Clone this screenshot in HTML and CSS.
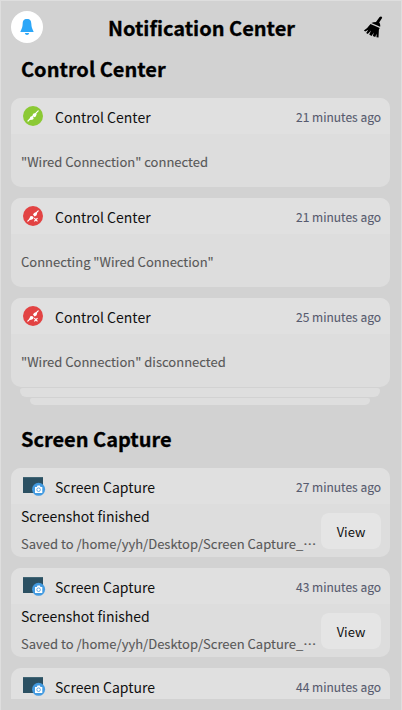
FILE: index.html
```html
<!DOCTYPE html>
<html lang="en">
<head>
<meta charset="utf-8">
<title>Notification Center</title>
<link rel="stylesheet" href="styles.css">
</head>
<body>
<svg class="defs" aria-hidden="true">
  <symbol id="net-plug" viewBox="0 0 20 20">
    <path d="M5 15L15.2 4.8" stroke="#fff" stroke-width="1.2" stroke-linecap="round"/>
    <path d="M6.600 13.200l.7-2.500 1.700-.5 1.800 1.800-.8 1.500-2.300.6z" fill="#fff"/>
    <path d="M9.500 9.600l.6-1.800 2.700-.8.900.9-.9 2.500-1.600.8z" fill="#fff"/>
  </symbol>
  <symbol id="net-off" viewBox="0 0 20 20">
    <path d="M4.800 15.200L7.500 12.500M12 8L15.200 4.800" stroke="#fff" stroke-width="1.200" stroke-linecap="round"/>
    <path d="M6.300 12.800l1-2.600 1.900-.3 1.500 1.500-.7 1.700-2.400.8z" fill="#fff"/>
    <path d="M10 8.700l1-1.800 2.100-.6 1 1-.5 2-1.900 1.200z" fill="#fff"/>
    <path d="M11.300 12.200l3.200 3.200M14.500 12.200l-3.200 3.200" stroke="#fff" stroke-width="1.200"/>
  </symbol>
  <symbol id="capture" viewBox="0 0 24 20">
    <rect x="0" y="1" width="20" height="16" rx=".6" fill="#2b5062"/>
    <path d="M.5 1.500h19" stroke="#416675"/>
    <circle cx="15.600" cy="13.300" r="6.500" fill="#439be1"/>
    <path d="M12 11h1.800l.7-1.400h2.300l.7 1.400h1.800v6H12z" fill="#fff"/>
    <circle cx="15.600" cy="13.700" r="1.800" fill="none" stroke="#439be1" stroke-width=".8"/>
  </symbol>
</svg>
<main class="panel">
  <header class="top">
    <span class="bell"><svg width="14" height="17" viewBox="0 0 14 17"><path d="M7 0C10.300 0 11.200 2 11.300 4.600C11.500 8.300 12 9.500 13.700 12.900H.3C2 9.500 2.500 8.300 2.700 4.600C2.800 2 3.700 0 7 0zM4.800 14h4.400Q8.800 15.900 7 15.900T4.800 14z" fill="#2ca7f8"/></svg></span>
    <h1>Notification Center</h1>
    <svg class="broom" width="20" height="22" viewBox="0 0 20 22"><path d="M16.600.9Q18.600-.1 19.200 1.700L16.200 6.500Q17.700 8.300 17.100 10.800L8.400 7.100Q10.400 5.900 13 5.900z"/><path d="M7.500 8.100L16.700 12L15.900 13.800L15.500 21.500L13.500 21.300L13.600 17.800L12.200 20.900L9.800 19.900L10.900 16.500L8.500 20.100L6.200 18.600L8.100 14.600L4.700 17.900L3.200 16.900L5.300 13.800L2.200 15.600L.9 14.400Q4.500 12.500 7.500 8.100z"/></svg>
  </header>
  <div class="list">
    <h2>Control Center</h2>
    <section class="group">
      <article class="card">
        <div class="head"><span class="disc green"><svg width="20" height="20"><use href="#net-plug"/></svg></span><span class="app">Control Center</span><time>21 minutes ago</time></div>
        <p class="message">"Wired Connection" connected</p>
      </article>
      <article class="card">
        <div class="head"><span class="disc red"><svg width="20" height="20"><use href="#net-off"/></svg></span><span class="app">Control Center</span><time>21 minutes ago</time></div>
        <p class="message">Connecting "Wired Connection"</p>
      </article>
      <article class="card">
        <div class="head"><span class="disc red"><svg width="20" height="20"><use href="#net-off"/></svg></span><span class="app">Control Center</span><time>25 minutes ago</time></div>
        <p class="message">"Wired Connection" disconnected</p>
      </article>
    </section>
    <div class="stack"><i class="first"></i><i class="second"></i></div>
    <h2 class="next">Screen Capture</h2>
    <section class="group">
      <article class="card">
        <div class="head"><svg class="shot" width="24" height="20"><use href="#capture"/></svg><span class="app">Screen Capture</span><time>27 minutes ago</time></div>
        <div class="body"><div class="copy"><p class="title">Screenshot finished</p><p class="path">Saved to /home/yyh/Desktop/Screen Capture_<span class="dots" lang="zh-CN">…</span></p></div><button>View</button></div>
      </article>
      <article class="card">
        <div class="head"><svg class="shot" width="24" height="20"><use href="#capture"/></svg><span class="app">Screen Capture</span><time>43 minutes ago</time></div>
        <div class="body"><div class="copy"><p class="title">Screenshot finished</p><p class="path">Saved to /home/yyh/Desktop/Screen Capture_<span class="dots" lang="zh-CN">…</span></p></div><button>View</button></div>
      </article>
      <article class="card cut">
        <div class="head"><svg class="shot" width="24" height="20"><use href="#capture"/></svg><span class="app">Screen Capture</span><time>44 minutes ago</time></div>
      </article>
    </section>
  </div>
</main>
</body>
</html>
```
FILE: styles.css
```css
* { box-sizing: border-box; margin: 0; padding: 0; }
body { width: 402px; height: 710px; overflow: hidden; background: #d2d2d2; color: #111; font-family: "Noto Sans CJK SC", "Noto Sans", sans-serif; }
.defs { display: none; }
.panel { height: 710px; padding: 10px 11px 0 10px; border: 1px solid #dedede; border-bottom: 0; overflow: hidden; }
.top { display: flex; align-items: center; height: 32px; }
.bell { display: flex; width: 32px; height: 32px; border-radius: 50%; background: #fff; align-items: center; justify-content: center; }
h1, h2 { font-size: 20px; line-height: 32px; font-weight: 700; color: #000; -webkit-text-stroke: .3px #000; }
h1 { flex: 1; text-align: center; padding: 1px 0 0 2px; }
.broom { width: 20px; height: 22px; margin: 0 7px 0 5px; }
h2 { height: 55px; padding: 10px 10px 0; }
.group { display: flex; flex-direction: column; gap: 11px; }
.card { width: 379px; height: 89px; border-radius: 10px; background: #ddd; overflow: hidden; }
.head { display: flex; align-items: center; height: 36px; padding: 0 9px 0 12px; background: #e0e0e0; }
.disc { width: 20px; height: 20px; border-radius: 50%; }
.disc svg { display: block; }
.green { background: #8bc934; }
.red { background: #e24343; }
.shot { margin-right: -4px; }
.app { flex: 1; padding: 2px 0 0 12px; font-size: 14px; line-height: 22px; }
time { padding-top: 2px; font-size: 12px; line-height: 20px; color: #565a6e; -webkit-text-stroke: .1px #565a6e; }
.message, .path { font-size: 13px; line-height: 20px; color: #585858; white-space: nowrap; -webkit-text-stroke: .12px #585858; }
.message { padding: 18px 10px 0; }
.stack { display: flex; flex-direction: column; align-items: center; gap: 1px; width: 378px; height: 29px; padding-top: 1px; }
.stack i { display: block; background: #dedede; }
.first { width: 360px; height: 9px; border-radius: 4px 4px 9px 9px; }
.second { width: 340px; height: 7px; border-radius: 3px 3px 7px 7px; }
.next { height: 52px; padding-top: 7px; }
.body { display: flex; height: 53px; padding: 1px 9px 0 10px; }
.copy { flex: 1; min-width: 0; }
.title { font-size: 14px; line-height: 22px; }
.path { padding-top: 7px; }
button { flex: none; width: 60px; height: 36px; margin-top: 8px; padding-top: 2px; border: 0; border-radius: 8px; background: #e5e5e5; color: #111; font: 13px/20px "Noto Sans CJK SC", sans-serif; }
.cut { height: 31px; border-radius: 10px 10px 0 0; }
```
